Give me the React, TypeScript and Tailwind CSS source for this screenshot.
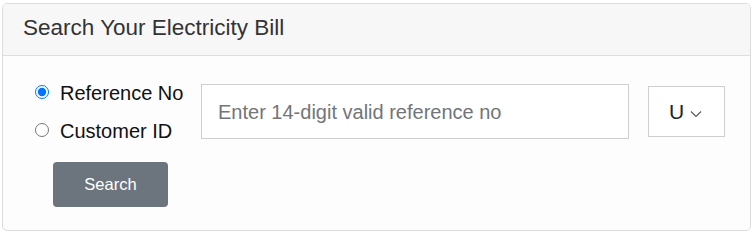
import React from "react";

export default function App() {
  return (
    <div className="w-[755px] h-[232px] bg-white pt-[3px] pl-[2px] font-['Liberation_Sans',Arial,sans-serif] overflow-hidden">
      <div className="w-[749px] h-[228px] border border-[#dcdcdc] rounded-[5px] bg-[#fdfdfd] overflow-hidden">
        <div className="h-[52px] bg-[#f7f7f8] border-b border-[#dedede] flex items-center pl-[20px]">
          <span className="text-[22.5px] text-[#333] leading-none -mt-[2px]">Search Your Electricity Bill</span>
        </div>
        <div className="flex pt-[28px] pl-[32px]">
          <div className="flex flex-col w-[166px]">
            <label className="flex items-center h-[22px] -mt-[2px]">
              <input type="radio" name="t" defaultChecked className="w-[14px] h-[14px] m-0 -mt-[2px] accent-[#0075ff]" />
              <span className="ml-[11px] text-[20px] text-[#111] leading-none">Reference No</span>
            </label>
            <label className="flex items-center h-[22px] mt-[16px]">
              <input type="radio" name="t" className="w-[14px] h-[14px] m-0 -mt-[2px]" />
              <span className="ml-[11px] text-[20px] text-[#111] leading-none">Customer ID</span>
            </label>
          </div>
          <div className="w-[428px] h-[55px] border border-[#cfcfcf] bg-white flex items-center pl-[16px]">
            <span className="text-[20px] text-[#727579] leading-none">Enter 14-digit valid reference no</span>
          </div>
          <div className="ml-[19px] mt-[2px] w-[77px] h-[51px] border border-[#cfcfcf] bg-white flex items-center pl-[20px]">
            <span className="text-[21px] text-[#222] leading-none">U</span>
            <svg width="12" height="8" viewBox="0 0 12 8" className="ml-[6px] mt-[4px]">
              <path d="M1 1.5 L6 6.5 L11 1.5" fill="none" stroke="#555" strokeWidth="1.1" />
            </svg>
          </div>
        </div>
        <div className="pl-[50px] mt-[20px]">
          <div className="w-[115px] h-[45px] bg-[#6c757d] rounded-[4px] flex items-center justify-center">
            <span className="text-white text-[16.5px] leading-none">Search</span>
          </div>
        </div>
      </div>
    </div>
  );
}
